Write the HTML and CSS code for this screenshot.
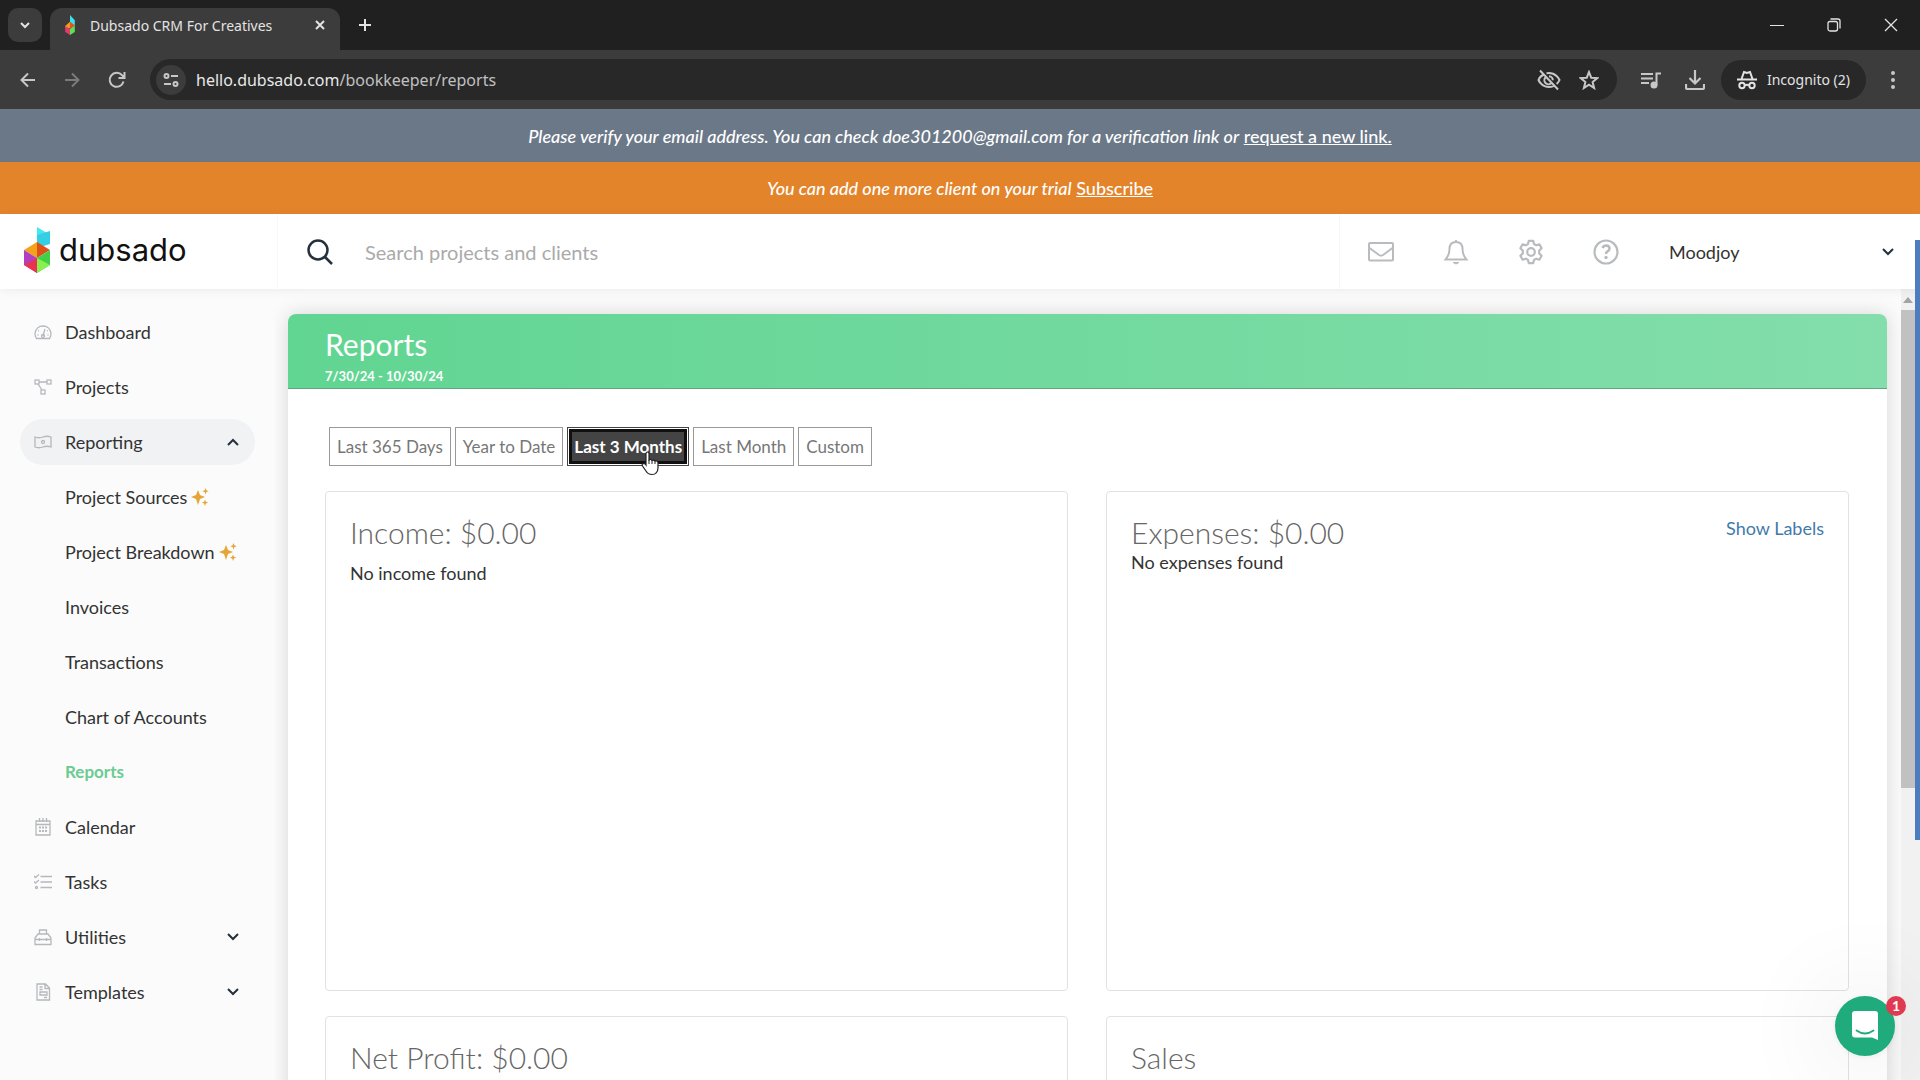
FILE: index.html
```
<!DOCTYPE html>
<html lang="en">
<head>
  <meta charset="UTF-8" />
  <meta name="viewport" content="width=device-width, initial-scale=1.0" />
  <title>Dubsado CRM For Creatives</title>
  <link rel="stylesheet" href="styles.css">
</head>
<body>
  <!-- browser window -->
  <div class="tab-strip">
    <button class="tab-search" aria-label="Search tabs">
      <svg width="12" height="12" viewBox="0 0 12 12"><path d="M2 4l4 4 4-4" fill="none" stroke="currentColor" stroke-width="2"/></svg>
    </button>
    <div class="tab">
      <svg class="favicon" width="12" height="20" viewBox="0 0 26 54">
        <path d="M13 0l13 14v15l-13-9z" fill="#3de0ee"/><path d="M0 30l13-12v18L0 36z" fill="#f39a1d"/><path d="M13 18l13 10-13 10z" fill="#e0551e"/><path d="M0 30l13 8v16L0 46z" fill="#e23a6b"/><path d="M13 38l13-10v18l-13 8z" fill="#5fe052"/>
      </svg>
      <span class="tab-title">Dubsado CRM For Creatives</span>
      <button class="bare" aria-label="Close tab">
        <svg width="12" height="12" viewBox="0 0 12 12"><path d="M2 2l8 8M10 2l-8 8" stroke="currentColor" stroke-width="2"/></svg>
      </button>
    </div>
    <button class="bare new-tab" aria-label="New tab">
      <svg width="14" height="14" viewBox="0 0 14 14"><path d="M7 1v12M1 7h12" stroke="currentColor" stroke-width="2"/></svg>
    </button>
    <div class="window-buttons">
      <button class="bare" aria-label="Minimize"><svg width="14" height="14" viewBox="0 0 14 14"><path d="M0 7.500h14" stroke="currentColor"/></svg></button>
      <button class="bare" aria-label="Restore"><svg width="14" height="14" viewBox="0 0 14 14" fill="none" stroke="currentColor" stroke-width="1.300"><rect x="1" y="3.500" width="9.500" height="9.500" rx="2"/><path d="M3.500 1h7.500a2 2 0 0 1 2 2v7.500"/></svg></button>
      <button class="bare" aria-label="Close"><svg width="14" height="14" viewBox="0 0 14 14"><path d="M1 1l12 12M13 1L1 13" stroke="currentColor" stroke-width="1.300"/></svg></button>
    </div>
  </div>

  <div class="toolbar">
    <div class="nav-buttons">
      <button class="bare" aria-label="Back"><svg width="16" height="16" viewBox="0 0 16 16" fill="none" stroke="currentColor" stroke-width="2"><path d="M15 8H2M8 1.500L1.500 8 8 14.500"/></svg></button>
      <button class="bare dim" aria-label="Forward"><svg width="16" height="16" viewBox="0 0 16 16" fill="none" stroke="currentColor" stroke-width="2"><path d="M1 8h13M8 1.500L14.500 8 8 14.500"/></svg></button>
      <button class="bare" aria-label="Reload"><svg width="18" height="18" viewBox="0 0 18 18" fill="none" stroke="currentColor" stroke-width="2"><path d="M15.500 10.500A7 7 0 1 1 14 4.200L16 6.500M16.500 1v6h-6"/></svg></button>
    </div>
    <div class="url-bar">
      <button class="site-info" aria-label="Site information"><svg width="16" height="14" viewBox="0 0 16 14" fill="none" stroke="currentColor" stroke-width="2"><circle cx="3.500" cy="3" r="2"/><path d="M8 3h7M1 11h7"/><circle cx="12.500" cy="11" r="2"/></svg></button>
      <span class="url">hello.dubsado.com<span class="url-path">/bookkeeper/reports</span></span>
      <button class="bare" aria-label="Third-party cookies blocked"><svg width="24" height="22" viewBox="0 0 24 22" fill="none" stroke="currentColor" stroke-width="2"><path d="M7 5.500C3 7 1.500 11 1.500 11S4.500 18 12 18c2 0 3.500-.5 5-1.200M9.500 4.200C19 2.500 22.500 11 22.500 11s-.8 2-2.800 4M8.500 8.500a4 4 0 0 0 5.500 5.800M12 7.200a4 4 0 0 1 3.800 4M3 1.500l18 19"/></svg></button>
      <button class="bare" aria-label="Bookmark"><svg width="20" height="20" viewBox="0 0 20 20"><path d="M10 2l2.200 5.700 6 .4-4.600 3.900 1.500 6L10 14.700 4.900 18l1.500-6-4.600-3.900 6-.4z" fill="none" stroke="currentColor" stroke-width="2"/></svg></button>
    </div>
    <button class="bare" aria-label="Media"><svg width="20" height="18" viewBox="0 0 20 18" fill="none" stroke="currentColor" stroke-width="2"><path d="M0 3h12M0 7.500h12M0 12h8M15.500 14V2.500H20"/><circle cx="13" cy="14" r="2.500" fill="currentColor"/></svg></button>
    <button class="bare" aria-label="Downloads"><svg width="20" height="20" viewBox="0 0 20 20" fill="none" stroke="currentColor" stroke-width="2.200"><path d="M10 0v13M4.500 8l5.500 5.500L15.500 8M1 14v3.500q0 1.500 1.500 1.500h15q1.500 0 1.500-1.500V14"/></svg></button>
    <button class="incognito">
      <svg width="20" height="20" viewBox="0 0 20 20" fill="none" stroke="currentColor" stroke-width="2"><path d="M0 9.500h20M4.500 9L7 2l3 1 3-1 2.500 7M8 15.500q2-1.500 4 0"/><circle cx="5" cy="15.500" r="2.700"/><circle cx="15" cy="15.500" r="2.700"/></svg>
      Incognito (2)
    </button>
    <button class="bare" aria-label="Menu"><svg width="6" height="20" viewBox="0 0 6 20" fill="currentColor"><circle cx="3" cy="3" r="2"/><circle cx="3" cy="10" r="2"/><circle cx="3" cy="17" r="2"/></svg></button>
  </div>

  <div class="banner verify"><span><em>Please verify your email address. You can check doe301200@gmail.com for a verification link or</em> <a href="#">request a new link.</a></span></div>
  <div class="banner trial"><span><em>You can add one more client on your trial</em> <a href="#">Subscribe</a></span></div>

  <header class="header">
    <a class="logo" href="#">
      <svg width="26" height="46" viewBox="0 0 26 46">
        <path d="M13 0l13 8v9l-13-3z" fill="#3fe9f5"/><path d="M13 8l13-4v13l-13 4z" fill="#35cfe3"/>
        <path d="M0 23l13-8 1 8-1 8z" fill="#f3a21b"/><path d="M13 15l13 8-13 8z" fill="#df4f18"/>
        <path d="M0 23l13 8v15L0 38z" fill="#b23fc0"/><path d="M13 31v15L0 38z" fill="#ea3350"/>
        <path d="M13 31l13-8v15l-13 8z" fill="#43cf4a"/><path d="M13 31l13 7-13 8z" fill="#8af04f"/>
      </svg>
      <span>dubsado</span>
    </a>
    <label class="search">
      <svg width="28" height="28" viewBox="0 0 28 28" fill="none" stroke="#25303b" stroke-width="2.500"><circle cx="12" cy="12" r="9.500"/><path d="M19 19l7 7"/></svg>
      <input type="text" placeholder="Search projects and clients" />
    </label>
    <div class="header-icons">
      <button class="bare" aria-label="Mail"><svg width="26" height="26" viewBox="0 0 26 26" fill="none" stroke="currentColor" stroke-width="2"><rect x="1" y="4" width="24" height="17.500" rx="1"/><path d="M1.500 9L11 16q2 1.300 4 0l9.500-7"/></svg></button>
      <button class="bare" aria-label="Notifications"><svg width="26" height="26" viewBox="0 0 26 26" fill="none" stroke="currentColor" stroke-width="2"><path d="M13 1v2M13 3c-4.500 0-6.500 3-6.500 7 0 6-1.500 7-4 10.500h21C21 17 19.500 16 19.500 10c0-4-2-7-6.500-7z"/><path d="M10 23.500h6L13 25z" fill="currentColor" stroke-width="1"/></svg></button>
      <button class="bare" aria-label="Settings"><svg width="26" height="26" viewBox="0 0 26 26" fill="none" stroke="currentColor" stroke-width="2.200" stroke-linejoin="round"><path d="M10.800 1.800h4.400l.8 3.300 2.200 1.200 3.200-1 2.200 3.900-2.400 2.400v2.800l2.400 2.400-2.200 3.900-3.200-1-2.200 1.200-.8 3.300h-4.400l-.8-3.300-2.200-1.200-3.200 1-2.200-3.900 2.400-2.400v-2.800L2.400 9.200l2.200-3.900 3.200 1L10 5.100z"/><circle cx="13" cy="13" r="3.800"/></svg></button>
      <button class="bare" aria-label="Help"><svg width="26" height="26" viewBox="0 0 26 26" fill="none" stroke="currentColor" stroke-width="2.200"><circle cx="13" cy="13" r="11.500"/><path d="M9.500 9q1-2.500 3.700-2.500 3.300.2 3.300 3 0 1.800-2 2.800-1.500.8-1.500 2.700" stroke-width="2.600"/><circle cx="13" cy="18.500" r="1.700" fill="currentColor" stroke="none"/></svg></button>
    </div>
    <button class="account">Moodjoy <svg class="chevron" width="12" height="8" viewBox="0 0 12 8"><path d="M1 1l5 5 5-5"/></svg></button>
  </header>

  <div class="workspace">
    <nav class="sidebar">
      <a href="#"><svg width="18" height="18" viewBox="0 0 18 18"><path d="M2.500 15.500A8 8 0 1 1 15.500 15.500zM9 13l2-7M9 4V3M4 7.500l1 .5M14 7.500l-1 .5M3.500 12h1M13.500 12h1"/><circle cx="9" cy="13" r="1.500"/></svg>Dashboard</a>
      <a href="#"><svg width="18" height="18" viewBox="0 0 18 18"><rect x="1" y="2" width="4" height="4"/><rect x="13" y="2" width="4" height="4"/><rect x="7" y="12" width="4" height="4"/><path d="M5 4h8M4 6l4 6"/></svg>Projects</a>
      <a href="#" class="open"><svg width="18" height="18" viewBox="0 0 18 18"><path d="M1 4q4 1.500 8 0t8 0v10q-4-1.500-8 0t-8 0z"/><circle cx="9" cy="9" r="1.500"/></svg>Reporting<svg class="chevron" width="12" height="8" viewBox="0 0 12 8"><path d="M1 7l5-5 5 5"/></svg></a>
      <a href="#" class="sub">Project Sources <svg class="sparkle" width="18" height="18" viewBox="0 0 18 18"><path d="M7 2l2 5 5 2-5 2-2 6-2-6-5-2 5-2zM14.500 0l.9 2.300 2.300.9-2.300.9-.9 2.300-.9-2.300-2.300-.9 2.300-.9zM14 11.500l.9 2.300 2.300.9-2.300.9L14 18l-.9-2.400-2.300-.9 2.300-.9z"/></svg></a>
      <a href="#" class="sub">Project Breakdown <svg class="sparkle" width="18" height="18" viewBox="0 0 18 18"><path d="M7 2l2 5 5 2-5 2-2 6-2-6-5-2 5-2zM14.500 0l.9 2.300 2.300.9-2.300.9-.9 2.300-.9-2.300-2.300-.9 2.300-.9zM14 11.500l.9 2.300 2.300.9-2.300.9L14 18l-.9-2.400-2.300-.9 2.300-.9z"/></svg></a>
      <a href="#" class="sub">Invoices</a>
      <a href="#" class="sub">Transactions</a>
      <a href="#" class="sub">Chart of Accounts</a>
      <a href="#" class="sub current">Reports</a>
      <a href="#"><svg width="18" height="18" viewBox="0 0 18 18"><path d="M2 3h14v14H2zM2 6.500h14M5.500 0v4M9 0v4M12.500 0v4"/><path d="M5 9.500h2M8 9.500h2M11 9.500h2M5 13h2M8 13h2M11 13h2" stroke-width="2"/></svg>Calendar</a>
      <a href="#"><svg width="18" height="18" viewBox="0 0 18 18"><path d="M6.500 3.500H18M6.500 9H18M6.500 14.500H18M0 3l1.500 1.500L5 1.500M0 8.500L1.500 10 5 7"/><circle cx="2.500" cy="14.500" r="1"/></svg>Tasks</a>
      <a href="#"><svg width="18" height="18" viewBox="0 0 18 18"><path d="M1 16.500V10l3-4h10l3 4v6.500zM1 11.500h16M5.500 6V2h7v4M5.500 10v3M12.500 10v3"/></svg>Utilities<svg class="chevron" width="12" height="8" viewBox="0 0 12 8"><path d="M1 1l5 5 5-5"/></svg></a>
      <a href="#"><svg width="18" height="18" viewBox="0 0 18 18"><path d="M3 1h8.500L15.500 5v12H3zM11 1v4.500h4.500M5.500 4h3M5.500 6.500h3M6 9h7v3H6zM10 14.500h3"/></svg>Templates<svg class="chevron" width="12" height="8" viewBox="0 0 12 8"><path d="M1 1l5 5 5-5"/></svg></a>
    </nav>

    <main class="main">
      <section class="card">
        <div class="card-header">
          <h1>Reports</h1>
          <div class="dates">7/30/24 - 10/30/24</div>
        </div>
        <div class="card-body">
          <div class="filters">
            <button>Last 365 Days</button>
            <button>Year to Date</button>
            <button class="active">Last 3 Months
              <svg class="pointer" width="20" height="25" viewBox="0 0 20 25"><path d="M5 14V2.500q0-1.500 1.500-1.500T8 2.500V9q2-1.300 3 .5 2-1 3 .7 3-.8 3 1.800v5q0 3-2 5-1 1.500-4 1.500-4 0-6-3.500L1.500 15q-1-2 .8-2.500Q4 12.500 5 14z" fill="#fff" stroke="#222" stroke-width="1.200"/><path d="M8 9v4M11 9.500V13M14 10.500V13" stroke="#222"/></svg>
            </button>
            <button>Last Month</button>
            <button>Custom</button>
          </div>
          <div class="panels">
            <div class="panel income">
              <h2>Income: $0.00</h2>
              <p>No income found</p>
            </div>
            <div class="panel">
              <div class="panel-top"><h2>Expenses: $0.00</h2><a href="#">Show Labels</a></div>
              <p>No expenses found</p>
            </div>
            <div class="panel"><h2>Net Profit: $0.00</h2></div>
            <div class="panel"><h2>Sales</h2></div>
          </div>
        </div>
      </section>
    </main>
    <div class="scrollbar">
      <svg width="10" height="6" viewBox="0 0 10 6"><path d="M5 0l5 6H0z" fill="#a3a3a3"/></svg>
      <div class="thumb"></div>
    </div>
  </div>

  <div class="edge"></div>
  <button class="chat" aria-label="Open chat">
    <svg width="28" height="32" viewBox="0 0 28 32"><path d="M4 1h20q3 0 3 3v26l-6-2.500H4q-3 0-3-3V4q0-3 3-3z" fill="#fff"/><path d="M5.500 20.500q8.500 6 17 0" fill="none" stroke="#20ab7c" stroke-width="1.800" stroke-linecap="round"/></svg>
    <span class="badge">1</span>
  </button>
</body>
</html>
```
FILE: styles.css
```
* {
  box-sizing: border-box;
}

body {
  margin: 0;
  height: 100vh;
  display: flex;
  flex-direction: column;
  overflow: hidden;
  position: relative;
  font-family: Lato, "Open Sans", sans-serif;
  font-size: 18px;
  line-height: 24px;
  color: #333;
  background: #fbfbfb;
}

button, input {
  font: inherit;
  color: inherit;
}

.bare {
  display: flex;
  padding: 0;
  border: none;
  background: none;
}

/* browser window */
.tab-strip {
  display: flex;
  align-items: center;
  flex: none;
  height: 50px;
  padding: 0 22px 0 8px;
  background: #202020;
  color: #e3e3e3;
  font: 14px "Noto Sans", sans-serif;
}

.tab-search {
  display: flex;
  align-items: center;
  justify-content: center;
  width: 34px;
  height: 34px;
  padding: 0;
  border: none;
  border-radius: 10px;
  background: #3c3c3c;
}

.tab {
  display: flex;
  align-items: center;
  align-self: flex-end;
  width: 290px;
  height: 42px;
  margin-left: 8px;
  padding: 0 14px 8px;
  border-radius: 12px 12px 0 0;
  background: #3c3c3c;
}

.tab-title {
  flex: 1;
  margin-left: 14px;
}

.new-tab {
  margin-left: 18px;
}

.window-buttons {
  display: flex;
  gap: 43px;
  margin-left: auto;
}

.toolbar {
  display: flex;
  align-items: center;
  flex: none;
  gap: 24px;
  height: 59px;
  padding: 0 24px 0 20px;
  background: #3c3c3c;
  color: #c7c7c7;
  font: 16px "Noto Sans", sans-serif;
}

.nav-buttons {
  display: flex;
  align-items: center;
  gap: 28px;
}

.dim {
  color: #7b7b7b;
}

.url-bar {
  display: flex;
  align-items: center;
  flex: 1;
  gap: 18px;
  height: 41px;
  padding: 0 18px 0 6px;
  border-radius: 21px;
  background: #282828;
}

.site-info {
  display: flex;
  align-items: center;
  justify-content: center;
  width: 30px;
  height: 30px;
  padding: 0;
  border: none;
  border-radius: 50%;
  background: #3c3c3c;
}

.url {
  flex: 1;
  margin-left: -8px;
  color: #e8e8e8;
}

.url-path {
  color: #c0c0c0;
}

.incognito {
  display: flex;
  align-items: center;
  gap: 10px;
  height: 40px;
  margin-left: -8px;
  padding: 0 16px;
  border: none;
  border-radius: 20px;
  background: #282828;
  color: #e3e3e3;
  font-size: 14px;
}

/* banners */
.banner {
  display: flex;
  align-items: center;
  justify-content: center;
  flex: none;
  height: 53px;
  color: #fff;
  font-weight: 500;
}

.banner a {
  color: #fff;
}

.verify {
  background: #6b7888;
}

.trial {
  height: 52px;
  background: #e3842b;
}

.header {
  display: flex;
  flex: none;
  height: 75px;
  background: #fff;
  box-shadow: 0 2px 10px rgba(0, 0, 0, 0.06);
  z-index: 1;
}

.logo {
  display: flex;
  align-items: center;
  gap: 9px;
  width: 278px;
  padding: 0 24px 3px;
  border-right: 1px solid #f8f8f8;
  color: #111;
  font-family: Inter, sans-serif;
  font-size: 31px;
  text-decoration: none;
}

.search {
  display: flex;
  align-items: center;
  flex: 1;
  gap: 29px;
  padding-left: 28px;
  border-right: 1px solid #f8f8f8;
}

.search input {
  flex: 1;
  border: none;
  outline: none;
  background: none;
  font-size: 20px;
}

.search input::placeholder {
  color: #aaa;
}

.header-icons {
  display: flex;
  align-items: center;
  gap: 49px;
  padding: 0 50px 0 28px;
  color: #b9bcbf;
}

.account {
  display: flex;
  align-items: center;
  justify-content: space-between;
  width: 251px;
  padding: 0 26px 0 0;
  border: none;
  background: none;
}

.chevron {
  fill: none;
  stroke: #25303b;
  stroke-width: 2;
}

.workspace {
  display: flex;
  flex: 1;
  min-height: 0;
}

/* side menu */
.sidebar {
  display: flex;
  flex-direction: column;
  flex: none;
  gap: 9px;
  width: 275px;
  padding: 20px 20px 0;
}

.sidebar a {
  display: flex;
  align-items: center;
  flex: none;
  gap: 13px;
  height: 46px;
  padding: 0 16px 0 14px;
  border-radius: 23px;
  color: #333;
  text-decoration: none;
}

.sidebar svg {
  flex: none;
  fill: none;
  stroke: #b5b8bc;
  stroke-width: 1.3;
}

.sidebar .chevron {
  margin-left: auto;
  stroke: #25303b;
  stroke-width: 2;
}

.sidebar .open {
  background: #f1f2f4;
}

.sidebar .sub {
  gap: 4px;
  padding: 0 0 0 45px;
}

.sidebar .current {
  color: #6bcb92;
  font-size: 17px;
  font-weight: bold;
}

.sidebar .sparkle {
  fill: #e5a637;
  stroke: none;
}

/* reports */
.main {
  flex: 1;
  min-width: 0;
  padding: 25px 14px 0 13px;
  overflow: hidden;
}

.card {
  border-radius: 8px;
  background: #fff;
  box-shadow: 0 0 20px rgba(0, 0, 0, 0.15);
}

.card-header {
  height: 75px;
  padding: 12px 37px 0;
  border-bottom: 1px solid #62a580;
  border-radius: 8px 8px 0 0;
  background: linear-gradient(to right, #61d592, #83deab);
  color: #fff;
}

h1 {
  margin: 0;
  font-size: 30px;
  font-weight: normal;
  line-height: 36px;
}

.dates {
  font-size: 13px;
  font-weight: bold;
  line-height: 28px;
}

.card-body {
  padding: 38px 38px 38px 37px;
}

.filters {
  display: flex;
  gap: 4px;
  padding-left: 4px;
}

.filters button {
  height: 39px;
  padding: 0 7px;
  border: 1px solid #999;
  background: #fff;
  color: #777;
  font-size: 17px;
}

.filters .active {
  position: relative;
  padding: 0 6px;
  border-color: #444;
  outline: 3px solid #101010;
  outline-offset: -5px;
  box-shadow: inset 0 0 0 1px #fff;
  background: #444;
  color: #fff;
  font-weight: bold;
}

.pointer {
  position: absolute;
  left: 73px;
  top: 23px;
}

.panels {
  display: grid;
  grid-template-columns: 1fr 1fr;
  grid-auto-rows: 500px;
  gap: 25px 38px;
  margin-top: 25px;
}

.panel {
  padding: 22px 24px;
  border: 1px solid #e2e2e2;
  border-radius: 4px;
}

.panel-top {
  display: flex;
  justify-content: space-between;
}

.panel a {
  padding-top: 2px;
  color: #427aab;
  text-decoration: none;
}

h2 {
  margin: 0;
  color: #666;
  font-size: 30px;
  font-weight: 300;
  line-height: 36px;
}

p {
  margin: 0;
}

.income p {
  margin-top: 11px;
}

.scrollbar {
  display: flex;
  flex-direction: column;
  align-items: center;
  flex: none;
  gap: 7px;
  width: 19px;
  padding: 8px 5px 0 0;
  background: #f1f1f1;
}

.thumb {
  width: 14px;
  height: 478px;
  background: #c1c1c1;
}

/* floating pieces over the page */
.edge {
  position: absolute;
  top: 240px;
  right: 0;
  width: 5px;
  height: 600px;
  background: #4a7ec0;
  z-index: 2;
}

.chat {
  position: absolute;
  right: 25px;
  bottom: 24px;
  display: flex;
  align-items: center;
  justify-content: center;
  width: 60px;
  height: 60px;
  padding: 0;
  border: none;
  border-radius: 50%;
  background: #20ab7c;
  box-shadow: 0 1px 6px rgba(0, 0, 0, 0.06), 0 2px 100px rgba(0, 0, 0, 0.16);
}

.badge {
  position: absolute;
  top: 0;
  right: -11px;
  width: 20px;
  height: 20px;
  border-radius: 50%;
  background: #e03a50;
  color: #fff;
  font-size: 14px;
  font-weight: bold;
  line-height: 20px;
}
```
